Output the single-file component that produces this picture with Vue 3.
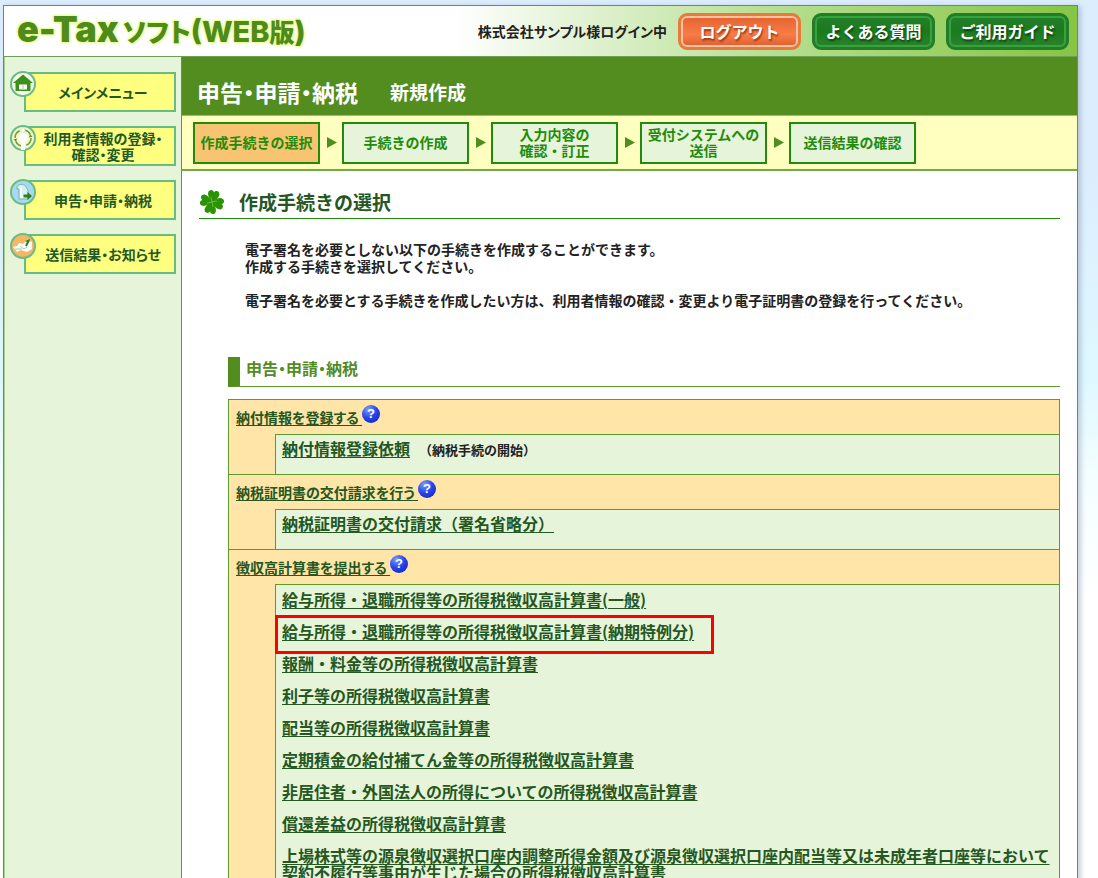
<script setup>
const sideMenu = [
  { icon: 'home', lines: ['メインメニュー'] },
  { icon: 'user', lines: ['利用者情報の登録・', '確認・変更'] },
  { icon: 'file', lines: ['申告・申請・納税'] },
  { icon: 'mail', lines: ['送信結果・お知らせ'] },
]

const steps = [
  ['作成手続きの選択'],
  ['手続きの作成'],
  ['入力内容の', '確認・訂正'],
  ['受付システムへの', '送信'],
  ['送信結果の確認'],
]

const groups = [
  {
    title: '納付情報を登録する',
    items: [{ text: '納付情報登録依頼', note: '（納税手続の開始）' }],
  },
  {
    title: '納税証明書の交付請求を行う',
    items: [{ text: '納税証明書の交付請求（署名省略分）' }],
  },
  {
    title: '徴収高計算書を提出する',
    items: [
      { text: '給与所得・退職所得等の所得税徴収高計算書(一般)' },
      { text: '給与所得・退職所得等の所得税徴収高計算書(納期特例分)', marked: true },
      { text: '報酬・料金等の所得税徴収高計算書' },
      { text: '利子等の所得税徴収高計算書' },
      { text: '配当等の所得税徴収高計算書' },
      { text: '定期積金の給付補てん金等の所得税徴収高計算書' },
      { text: '非居住者・外国法人の所得についての所得税徴収高計算書' },
      { text: '償還差益の所得税徴収高計算書' },
      {
        text: '上場株式等の源泉徴収選択口座内調整所得金額及び源泉徴収選択口座内配当等又は未成年者口座等において契約不履行等事由が生じた場合の所得税徴収高計算書',
      },
    ],
  },
]
</script>

<template>
  <div class="page">
    <header class="header">
      <div class="logo">
        <span class="logo-etax">e-Tax</span><span class="logo-soft">ソフト</span><span class="logo-web">(WEB<span class="logo-ban">版</span>)</span>
      </div>
      <div class="tools">
        <span class="login">株式会社サンプル様ログイン中</span>
        <button type="button" class="tool logout">ログアウト</button>
        <button type="button" class="tool">よくある質問</button>
        <button type="button" class="tool">ご利用ガイド</button>
      </div>
    </header>

    <div class="columns">
      <nav class="side">
        <a v-for="m in sideMenu" :key="m.icon" href="#" class="side-item">
          <svg class="side-icon" viewBox="0 0 26 26" aria-hidden="true">
            <template v-if="m.icon === 'home'">
              <circle cx="13" cy="13" r="12" fill="#f4fbe8" stroke="#67bb85" stroke-width="2" />
              <path d="M13 3.500 L23 12 H20.500 V20 H5.500 V12 H3 Z" fill="#3f8f1c" />
              <path d="M9 13.500h8v5H9z" fill="#fff" />
              <path d="M13 13.500v5" stroke="#a9cf94" stroke-width="1" />
            </template>
            <template v-else-if="m.icon === 'user'">
              <circle cx="13" cy="13" r="12" fill="#f3f8c8" stroke="#67bb85" stroke-width="2" />
              <circle cx="13" cy="13" r="8" fill="none" stroke="#6d9c3c" stroke-width="1.500" stroke-dasharray="9 3.500" />
              <circle cx="13" cy="5" r="2.200" fill="#fff" stroke="#a9cf94" stroke-width=".5" />
              <ellipse cx="13" cy="13" rx="4.500" ry="5" fill="#fff" />
              <path d="M11 16h4v9h-4z" fill="#fff" />
              <path d="M3.500 14.500l2.500 2 1-3z M22.500 11.500l-2.500-2-1 3z" fill="#4c8a20" />
            </template>
            <template v-else-if="m.icon === 'file'">
              <circle cx="13" cy="13" r="12" fill="#a9d8f2" stroke="#67bb85" stroke-width="2" />
              <path d="M7 8c0-3 8-4 9 0l2 3v9H9V10H7z" fill="#d5f0f4" stroke="#74ba9a" stroke-width="1" />
              <path d="M11 8.500v9.500h4" fill="none" stroke="#fff" stroke-width="2" />
              <path d="M13.500 15.500h4v-2.500l4.500 4-4.500 4v-2.500h-4z" fill="#2d7d1e" />
            </template>
            <template v-else>
              <circle cx="13" cy="13" r="12" fill="#f6b765" stroke="#67bb85" stroke-width="2" />
              <path d="M3 14l4-1 2-3 4 1 4-4 5 2v7l-5 3-6-2-4 2z" fill="#fff" />
              <path d="M5 16h7 M10 13l4 3 3-2" fill="none" stroke="#9fce9b" stroke-width="1" />
              <path d="M16 13l2-4" stroke="#2d7d1e" stroke-width="2" />
              <path d="M15 8l5-2-1 4z" fill="#2d7d1e" />
            </template>
          </svg>
          <span class="side-label"><span v-for="l in m.lines" :key="l" class="line">{{ l }}</span></span>
        </a>
      </nav>

      <main class="main">
        <div class="title-bar">
          <h1>申告・申請・納税</h1>
          <p>新規作成</p>
        </div>

        <ol class="steps">
          <li v-for="(s, i) in steps" :key="i" class="step-cell">
            <svg v-if="i" class="arrow" viewBox="0 0 10 12" aria-hidden="true"><path d="M0 0 L10 5.500 L0 11 Z" fill="#4c8f1f" /></svg>
            <span class="step" :class="{ current: i === 0 }"><span v-for="l in s" :key="l" class="line">{{ l }}</span></span>
          </li>
        </ol>

        <div class="content">
          <div class="heading">
            <svg class="clover" viewBox="0 0 26 26" aria-hidden="true">
              <g fill="#2a9400" transform="rotate(12 13 13)">
                <path id="leaf" d="M13 13.200C10.500 11 7.500 8 7.300 4.800C7 1 11.800 0 13 3.200C14.200 0 19 1 18.700 4.800C18.500 8 15.500 11 13 13.200Z" />
                <use href="#leaf" transform="rotate(90 13 13)" />
                <use href="#leaf" transform="rotate(180 13 13)" />
                <use href="#leaf" transform="rotate(270 13 13)" />
              </g>
              <path d="M12 8l2 10 M8 14l10-2" stroke="#7cc85a" stroke-width=".7" />
            </svg>
            <h2>作成手続きの選択</h2>
          </div>

          <p class="lead">
            電子署名を必要としない以下の手続きを作成することができます。<br />
            作成する手続きを選択してください。<br /><br />
            電子署名を必要とする手続きを作成したい方は、利用者情報の確認・変更より電子証明書の登録を行ってください。
          </p>

          <section class="procedures">
            <h3>申告・申請・納税</h3>
            <div class="groups">
              <div v-for="g in groups" :key="g.title" class="group">
                <div class="group-head">
                  <a href="#" class="group-link">{{ g.title }}&nbsp;</a>
                  <button type="button" class="help" :aria-label="g.title + 'のヘルプ'">?</button>
                </div>
                <ul class="items" :class="{ single: g.items.length === 1 }">
                  <li v-for="it in g.items" :key="it.text">
                    <span class="item" :class="{ marked: it.marked }"><a href="#">{{ it.text }}</a></span>
                    <span v-if="it.note" class="note">{{ it.note }}</span>
                  </li>
                </ul>
              </div>
            </div>
          </section>
        </div>
      </main>
    </div>
  </div>
</template>

<style>
body {
  margin: 0;
  background: linear-gradient(#dceefd 0, #dceefd 180px, #dff8ff 380px, #f4feff 480px, #ffffff 600px) no-repeat #ffffff;
}
</style>

<style scoped>
.page {
  box-sizing: border-box;
  min-height: 100vh;
  margin: 5px 20px 0 3px;
  border: 1px solid #5f9a3a;
  border-bottom: 0;
  background: #fff;
  box-shadow: 3px 1px 5px rgba(90, 100, 140, 0.3);
  color: #222;
  font-family: "Noto Sans CJK JP", sans-serif;
  font-size: 14px;
  line-height: 17px;
}
h1, h2, h3, p, ul, ol { margin: 0; padding: 0; font-weight: 700; }
ul, ol { list-style: none; }
.line { display: block; }

.header {
  display: flex;
  align-items: center;
  justify-content: space-between;
  height: 50px;
  padding: 0 8px 0 13px;
  border-bottom: 1px solid #6f9f55;
  background: linear-gradient(90deg, #fff 42%, #b5df90 72%, #86c545 100%);
}
.logo {
  display: flex;
  align-items: baseline;
  color: #4f8a1c;
  font-weight: 900;
  line-height: 40px;
  white-space: nowrap;
  font-feature-settings: "palt";
  text-shadow: 0 0 2px #e6ff8c, 0 0 3px #e6ff8c, 1px 1px 2px #e6ff8c, -1px -1px 2px #e6ff8c;
}
.logo-etax { font-family: Inter, sans-serif; font-size: 36px; }
.logo-soft { font-size: 26px; margin-left: 4px; }
.logo-web { font-family: Inter, "Noto Sans CJK JP", sans-serif; font-size: 29px; font-weight: 800; }
.logo-ban { font-size: 25px; font-weight: 900; }
.tools { display: flex; align-items: center; gap: 11px; }
.login { font-weight: 700; font-feature-settings: "palt"; white-space: nowrap; }
.tool {
  width: 123px;
  height: 37px;
  padding: 2px;
  border: 3px solid #227c28;
  border-radius: 9px;
  outline: 2px solid #36a43d;
  outline-offset: -5px;
  background: linear-gradient(#247f2b, #1c7a1e 50%, #2a832d);
  color: #fff;
  font: 700 16px/20px "Noto Sans CJK JP", sans-serif;
  white-space: nowrap;
  text-shadow: 1px 2px 2px rgba(0, 40, 0, 0.7);
}
.tool.logout {
  border-color: #e87b3c;
  outline-color: #f9c2a0;
  background: linear-gradient(#e4632f, #f97c48 60%, #dd5f2c);
  text-shadow: 1px 2px 2px rgba(110, 30, 0, 0.7);
}

.columns { display: flex; align-items: stretch; min-height: calc(100vh - 57px); }
.side {
  box-sizing: border-box;
  flex: 0 0 178px;
  padding: 15px 5px 0 19px;
  border-right: 1px solid #5f9a3a;
  border-left: 1px solid #a8d08c;
  background: #e6f4d9;
}
.side-item {
  box-sizing: border-box;
  position: relative;
  display: flex;
  align-items: center;
  justify-content: center;
  height: 40px;
  margin-bottom: 14px;
  padding: 0 0 1px 6px;
  border: 2px solid #67bb85;
  background: #ffff80;
  color: #1f5a24;
  font-weight: 700;
  line-height: 16px;
  text-align: center;
  text-decoration: none;
  font-feature-settings: "palt";
}
.side-icon { position: absolute; left: -16px; top: -3px; width: 26px; height: 26px; }

.main { flex: 1; min-width: 0; }
.title-bar {
  display: flex;
  align-items: center;
  gap: 32px;
  height: 58px;
  padding: 12px 15px 0;
  box-sizing: border-box;
  background: #538c1f;
  color: #fff;
}
.title-bar h1 { font-size: 23px; line-height: 30px; font-feature-settings: "palt"; }
.title-bar p { font-size: 19px; line-height: 30px; }
.steps {
  display: flex;
  padding: 6px 11px 5px;
  border-top: 1px solid #a5bf5f;
  border-bottom: 2px solid #6cae45;
  background: #ffffbf;
}
.step-cell { display: flex; align-items: center; }
.arrow { width: 10px; height: 12px; margin: 0 5px 0 7px; }
.step {
  box-sizing: border-box;
  display: flex;
  flex-direction: column;
  align-items: center;
  justify-content: center;
  width: 127px;
  height: 42px;
  padding-bottom: 3px;
  border: 2px solid #238b0c;
  background: #e6f4d9;
  color: #238b0c;
  font-weight: 700;
  line-height: 16px;
  white-space: nowrap;
}
.step.current { background: #f8c471; }

.content { padding: 15px 17px 20px; }
.heading {
  display: flex;
  align-items: center;
  gap: 14px;
  height: 32px;
  border-bottom: 1px solid #238b0c;
}
.clover { width: 26px; height: 26px; }
.heading h2 { color: #245722; font-size: 19px; line-height: 24px; }
.lead { margin: 22px 0 0 46px; font-weight: 700; }
.procedures { margin: 48px 0 0 29px; }
.procedures h3 {
  padding: 0 6px 6px;
  border-left: 12px solid #538c1f;
  border-bottom: 1px solid #5f9a2f;
  color: #538c1f;
  font-size: 16px;
  line-height: 23px;
  font-feature-settings: "palt";
}
.groups { margin-top: 12px; border: 1px solid #5f9a2f; background: #ffe5a8; }
.group + .group { border-top: 1px solid #5f9a2f; }
.group-head { display: flex; align-items: center; height: 34px; padding-left: 7px; }
.group-link { font-weight: 700; font-feature-settings: "palt"; }
.help {
  width: 18px;
  height: 18px;
  margin-bottom: 6px;
  padding: 0;
  border: 0;
  border-radius: 50%;
  background: radial-gradient(circle at 35% 25%, #7d9cff, #2947ee 45%, #1024b8 90%);
  color: #fff;
  font: 700 13px/18px "Liberation Sans", sans-serif;
}
.procedures a { color: #245722; text-underline-offset: 2px; text-decoration-thickness: 1px; }
.items {
  margin-left: 46px;
  padding-top: 2px;
  border-top: 1px solid #5f9a2f;
  border-left: 1px solid #5f9a2f;
  background: #e6f4d9;
}
.items.single { padding-top: 1px; }
.items li { padding: 4px 0 11px 6px; font-size: 16px; font-weight: 700; }
.items.single li { padding-bottom: 17px; }
.item { position: relative; }
.item.marked { display: inline-block; }
.item.marked::after {
  content: "";
  position: absolute;
  inset: -8px -20px -14px -7px;
  border: 3px solid #f00;
  pointer-events: none;
}
.note { margin-left: 9px; font-size: 13px; line-height: 1; }
</style>
